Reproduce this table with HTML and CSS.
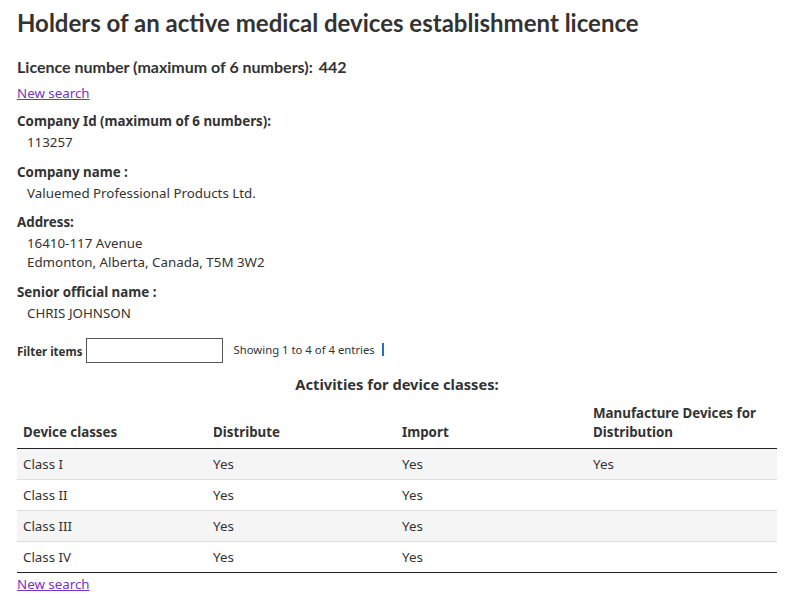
FILE: index.html
```html
<!DOCTYPE html>
<html lang="en">
<head>
<meta charset="utf-8">
<title>Holders of an active medical devices establishment licence</title>
<link rel="stylesheet" href="styles.css">
</head>
<body>
<main class="page">
  <h1 class="title">Holders of an active medical devices establishment licence</h1>
  <p class="licence">Licence number (maximum of 6 numbers): <span class="licence-num">442</span></p>
  <p class="link-row"><a href="#" class="visited">New search</a></p>
  <dl class="details">
    <dt>Company Id (maximum of 6 numbers):</dt>
    <dd>113257</dd>
    <dt>Company name :</dt>
    <dd>Valuemed Professional Products Ltd.</dd>
    <dt>Address:</dt>
    <dd>16410-117 Avenue<br>Edmonton, Alberta, Canada, T5M 3W2</dd>
    <dt>Senior official name :</dt>
    <dd>CHRIS JOHNSON</dd>
  </dl>
  <div class="filter">
    <label class="filter-label" for="f">Filter items</label>
    <input class="filter-input" id="f" type="text">
    <span class="info">Showing 1 to 4 of 4 entries</span>
    <span class="bar"></span>
  </div>
  <table class="grid">
    <caption>Activities for device classes:</caption>
    <colgroup>
      <col class="c1"><col class="c2"><col class="c3"><col class="c4">
    </colgroup>
    <thead>
      <tr>
        <th>Device classes</th>
        <th>Distribute</th>
        <th>Import</th>
        <th>Manufacture Devices for Distribution</th>
      </tr>
    </thead>
    <tbody>
      <tr><td>Class I</td><td>Yes</td><td>Yes</td><td>Yes</td></tr>
      <tr><td>Class II</td><td>Yes</td><td>Yes</td><td></td></tr>
      <tr><td>Class III</td><td>Yes</td><td>Yes</td><td></td></tr>
      <tr><td>Class IV</td><td>Yes</td><td>Yes</td><td></td></tr>
    </tbody>
  </table>
  <p class="link-row bottom"><a href="#" class="visited">New search</a></p>
</main>
</body>
</html>
```
FILE: styles.css
```css
html, body {
  margin: 0;
  padding: 0;
  background: #fff;
}
body {
  font-family: "Noto Sans", "Open Sans", sans-serif;
  font-size: 13.33px;
  line-height: 19px;
  color: #333;
}
.page {
  width: 760px;
  margin-left: 17px;
  padding-top: 7px;
}
.title {
  font-family: Lato, "Noto Sans", sans-serif;
  font-weight: 700;
  font-size: 24px;
  line-height: 31px;
  margin: 0;
  color: #333;
}
.licence {
  font-family: Lato, "Noto Sans", sans-serif;
  font-weight: 700;
  font-size: 16px;
  line-height: 20px;
  margin: 19px 0 0;
}
.licence-num {
  margin-left: 2px;
}
.link-row {
  margin: 7px 0 0;
}
.link-row.bottom {
  margin-top: 2px;
}
.visited {
  color: #7834bc;
  text-decoration: underline;
}
.details {
  margin: 9px 0 0;
}
.details dt {
  font-weight: 700;
  margin-top: 10.5px;
}
.details dt:first-child {
  margin-top: 0;
}
.details dd {
  margin: 2px 0 0 10px;
}
.filter {
  display: flex;
  align-items: center;
  margin-top: 15.5px;
  height: 25px;
}
.filter-label {
  font-weight: 700;
  font-size: 11.5px;
  margin-top: 2px;
}
.filter-input {
  box-sizing: border-box;
  width: 137px;
  height: 25px;
  margin: 0 0 0 4px;
  border: 1px solid #555;
  padding: 0 4px;
  font: inherit;
}
.info {
  font-size: 11.33px;
  margin-left: 10px;
  margin-top: -2px;
}
.bar {
  width: 2px;
  height: 13px;
  background: #2572b4;
  margin-left: 7px;
  margin-top: -2px;
}
.grid {
  width: 760px;
  border-collapse: collapse;
  table-layout: fixed;
  margin-top: 11px;
}
.grid .c1 { width: 190px; }
.grid .c2 { width: 189px; }
.grid .c3 { width: 191px; }
.grid .c4 { width: 190px; }
.grid caption {
  font-weight: 700;
  font-size: 14.67px;
  line-height: 20px;
  padding-bottom: 5px;
}
.grid th {
  font-weight: 700;
  text-align: left;
  vertical-align: bottom;
  padding: 5px 6px 6px;
  border-bottom: 1px solid #222;
}
.grid td {
  padding: 6px 6px 5px;
  border-bottom: 1px solid #ddd;
}
.grid tbody tr:nth-child(odd) td {
  background: #f5f5f5;
}
.grid tbody tr:last-child td {
  border-bottom: 1px solid #222;
}
```
